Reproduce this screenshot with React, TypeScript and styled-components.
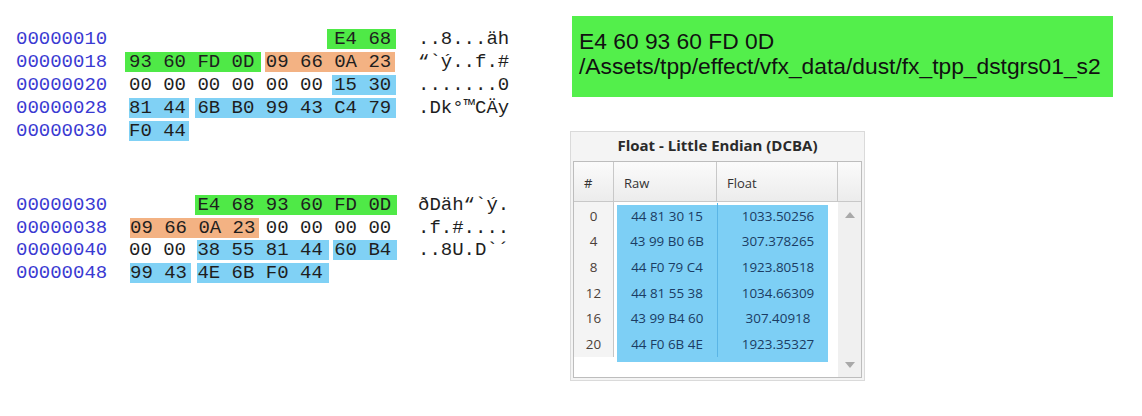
import React from "react";
import styled, { createGlobalStyle } from "styled-components";

const GlobalStyle = createGlobalStyle`
  html, body { margin: 0; padding: 0; background: #ffffff; }
  body { width: 1142px; height: 416px; overflow: hidden; }
`;

const CHAR = 11.4;
const BYTE = CHAR * 3;
const TEXT0 = 129;
const HEX_LEFT = 125;

type Tone = "green" | "orange" | "blue";
const TONES: Record<Tone, string> = {
  green: "#4fe947",
  orange: "#f3b283",
  blue: "#80d1f5",
};

type Seg = { from?: number; to?: number; bg?: Tone; start: number; text: string };
type HexLine = { offset: string; segs: Seg[]; ascii: string };

const block1: HexLine[] = [
  { offset: "00000010", segs: [{ from: 327, to: 396, bg: "green", start: 6, text: "E4 68" }], ascii: "..8...äh" },
  {
    offset: "00000018",
    segs: [
      { from: 125, to: 261, bg: "green", start: 0, text: "93 60 FD 0D" },
      { from: 265, to: 395, bg: "orange", start: 4, text: "09 66 0A 23" },
    ],
    ascii: "\u201C`ý..f.#",
  },
  {
    offset: "00000020",
    segs: [
      { start: 0, text: "00 00 00 00 00 00" },
      { from: 332, to: 396, bg: "blue", start: 6, text: "15 30" },
    ],
    ascii: ".......0",
  },
  {
    offset: "00000028",
    segs: [
      { from: 129, to: 189, bg: "blue", start: 0, text: "81 44" },
      { from: 195, to: 396, bg: "blue", start: 2, text: "6B B0 99 43 C4 79" },
    ],
    ascii: ".Dk°\u2122CÄy",
  },
  { offset: "00000030", segs: [{ from: 129, to: 189, bg: "blue", start: 0, text: "F0 44" }], ascii: "" },
];

const block2: HexLine[] = [
  { offset: "00000030", segs: [{ from: 195, to: 397, bg: "green", start: 2, text: "E4 68 93 60 FD 0D" }], ascii: "ðDäh\u201C`ý." },
  {
    offset: "00000038",
    segs: [
      { from: 130, to: 259, bg: "orange", start: 0, text: "09 66 0A 23" },
      { start: 4, text: "00 00 00 00" },
    ],
    ascii: ".f.#....",
  },
  {
    offset: "00000040",
    segs: [
      { start: 0, text: "00 00" },
      { from: 197, to: 329, bg: "blue", start: 2, text: "38 55 81 44" },
      { from: 333, to: 397, bg: "blue", start: 6, text: "60 B4" },
    ],
    ascii: "..8U.D`\u00B4",
  },
  {
    offset: "00000048",
    segs: [
      { from: 130, to: 191, bg: "blue", start: 0, text: "99 43" },
      { from: 197, to: 329, bg: "blue", start: 2, text: "4E 6B F0 44" },
    ],
    ascii: "",
  },
];

const floatRows = [
  { idx: "0", raw: "44 81 30 15", val: "1033.50256" },
  { idx: "4", raw: "43 99 B0 6B", val: "307.378265" },
  { idx: "8", raw: "44 F0 79 C4", val: "1923.80518" },
  { idx: "12", raw: "44 81 55 38", val: "1034.66309" },
  { idx: "16", raw: "43 99 B4 60", val: "307.40918" },
  { idx: "20", raw: "44 F0 6B 4E", val: "1923.35327" },
];

/* ---------- layout ---------- */

const Page = styled.div`
  display: flex;
  align-items: flex-start;
  width: 1142px;
  height: 416px;
`;

const LeftPane = styled.div`
  width: 570px;
  padding-top: 27px;
  display: flex;
  flex-direction: column;
`;

const HexBlock = styled.div<{ $gap: number }>`
  display: flex;
  flex-direction: column;
  margin-top: ${(p) => p.$gap}px;
`;

const HexRow = styled.div<{ $h: number }>`
  display: flex;
  align-items: center;
  height: ${(p) => p.$h}px;
  font-family: "Liberation Mono", "Courier New", monospace;
  font-size: 19px;
  white-space: pre;
`;

const Offset = styled.div`
  width: ${HEX_LEFT}px;
  box-sizing: border-box;
  padding-left: 16px;
  color: #3a3ad2;
  flex: none;
`;

const HexArea = styled.div`
  display: flex;
  align-items: center;
  width: ${418 - HEX_LEFT}px;
  flex: none;
  color: #1e1e1e;
`;

const HexSeg = styled.span<{ $bg?: string; $ml: number; $w: number; $pl: number }>`
  display: block;
  flex: none;
  box-sizing: border-box;
  height: 20px;
  line-height: 20px;
  margin-left: ${(p) => p.$ml}px;
  width: ${(p) => p.$w}px;
  padding-left: ${(p) => p.$pl}px;
  background: ${(p) => p.$bg ?? "transparent"};
  overflow: visible;
`;

const Ascii = styled.div`
  color: #1e1e1e;
  flex: none;
`;

function HexLines({ lines, rowH }: { lines: HexLine[]; rowH: number }) {
  return (
    <>
      {lines.map((line, i) => {
        let cursor = HEX_LEFT;
        return (
          <HexRow key={i} $h={rowH}>
            <Offset>{line.offset}</Offset>
            <HexArea>
              {line.segs.map((s, j) => {
                const textX = TEXT0 + s.start * BYTE;
                const from = s.from ?? textX;
                const to = s.to ?? textX + s.text.length * CHAR;
                const ml = from - cursor;
                cursor = to;
                return (
                  <HexSeg key={j} $bg={s.bg ? TONES[s.bg] : undefined} $ml={ml} $w={to - from} $pl={textX - from}>
                    {s.text}
                  </HexSeg>
                );
              })}
            </HexArea>
            <Ascii>{line.ascii}</Ascii>
          </HexRow>
        );
      })}
    </>
  );
}

/* ---------- right side ---------- */

const RightPane = styled.div`
  display: flex;
  flex-direction: column;
  padding-top: 16px;
`;

const PathBox = styled.div`
  margin-left: 2px;
  width: 541px;
  height: 81px;
  box-sizing: border-box;
  background: #53ef4b;
  padding: 13px 0 0 7px;
  font-family: "Liberation Sans", Arial, sans-serif;
  font-size: 22.8px;
  line-height: 25px;
  color: #111111;
  white-space: nowrap;
`;

const TablePanel = styled.div`
  margin-top: 34px;
  width: 295px;
  height: 250px;
  box-sizing: border-box;
  border: 1px solid #dadada;
  background: #f4f4f4;
  padding: 0 2px 2px 2px;
  display: flex;
  flex-direction: column;
  font-family: "Open Sans", "Noto Sans", sans-serif;
`;

const PanelTitle = styled.div`
  height: 26px;
  margin-bottom: 3px;
  display: flex;
  align-items: center;
  justify-content: center;
  font-weight: 700;
  font-size: 15px;
  color: #2a2a2a;
`;

const Grid = styled.div`
  flex: 1;
  border: 1px solid #bdbdbd;
  background: #ffffff;
  display: flex;
  flex-direction: column;
`;

const HeaderRow = styled.div`
  display: grid;
  grid-template-columns: 40px 103px 121px 1fr;
  height: 39px;
  border-bottom: 1px solid #c8c8c8;
  background: linear-gradient(#fbfbfb, #ececec);
`;

const HeaderCell = styled.div<{ $last?: boolean }>`
  display: flex;
  align-items: center;
  padding: 3px 0 0 10px;
  border-right: ${(p) => (p.$last ? "none" : "1px solid #c8c8c8")};
  font-size: 13px;
  color: #333333;
`;

const Body = styled.div`
  flex: 1;
  display: flex;
  align-items: flex-start;
`;

const IndexCol = styled.div`
  width: 39px;
  background: #f4f4f4;
  border-right: 1px solid #c6c6c6;
  padding-top: 1px;
  display: flex;
  flex-direction: column;
`;

const Cell = styled.div<{ $pl?: number }>`
  height: 25.6px;
  display: flex;
  align-items: center;
  justify-content: center;
  padding-left: ${(p) => p.$pl ?? 0}px;
  font-size: 13.4px;
`;

const IndexCell = styled(Cell)`
  color: #4b4038;
`;

const Selection = styled.div`
  margin: 3px 0 0 3px;
  width: 211px;
  height: 157px;
  background: #7dcff5;
  display: flex;
  align-items: flex-start;
`;

const SelCol = styled.div<{ $w: number; $divider?: boolean }>`
  width: ${(p) => p.$w}px;
  margin-top: -2px;
  display: flex;
  flex-direction: column;
  border-right: ${(p) => (p.$divider ? "1px solid #5ab5e6" : "none")};
`;

const SelCell = styled(Cell)`
  color: #1b3c63;
`;

const Spacer = styled.div`
  flex: 1;
`;

const ScrollTrack = styled.div`
  width: 23px;
  align-self: stretch;
  background: #f0f0f0;
  display: flex;
  flex-direction: column;
  justify-content: space-between;
  align-items: center;
  padding: 10px 0 9px;
  box-sizing: border-box;
`;

const Arrow = ({ down }: { down?: boolean }) => (
  <svg width="10" height="6" viewBox="0 0 10 6">
    <polygon points={down ? "0,0 10,0 5,6" : "0,6 10,6 5,0"} fill="#a9a9a9" />
  </svg>
);

export default function App() {
  return (
    <>
      <GlobalStyle />
      <Page>
        <LeftPane>
          <HexBlock $gap={0}>
            <HexLines lines={block1} rowH={23} />
          </HexBlock>
          <HexBlock $gap={52}>
            <HexLines lines={block2} rowH={22.5} />
          </HexBlock>
        </LeftPane>
        <RightPane>
          <PathBox>
            <div>E4 60 93 60 FD 0D</div>
            <div>/Assets/tpp/effect/vfx_data/dust/fx_tpp_dstgrs01_s2</div>
          </PathBox>
          <TablePanel>
            <PanelTitle>Float - Little Endian (DCBA)</PanelTitle>
            <Grid>
              <HeaderRow>
                <HeaderCell>#</HeaderCell>
                <HeaderCell>Raw</HeaderCell>
                <HeaderCell>Float</HeaderCell>
                <HeaderCell $last />
              </HeaderRow>
              <Body>
                <IndexCol>
                  {floatRows.map((r) => (
                    <IndexCell key={r.idx}>{r.idx}</IndexCell>
                  ))}
                </IndexCol>
                <Selection>
                  <SelCol $w={100} $divider>
                    {floatRows.map((r) => (
                      <SelCell key={r.idx}>{r.raw}</SelCell>
                    ))}
                  </SelCol>
                  <SelCol $w={110}>
                    {floatRows.map((r) => (
                      <SelCell key={r.idx} $pl={10}>
                        {r.val}
                      </SelCell>
                    ))}
                  </SelCol>
                </Selection>
                <Spacer />
                <ScrollTrack>
                  <Arrow />
                  <Arrow down />
                </ScrollTrack>
              </Body>
            </Grid>
          </TablePanel>
        </RightPane>
      </Page>
    </>
  );
}
